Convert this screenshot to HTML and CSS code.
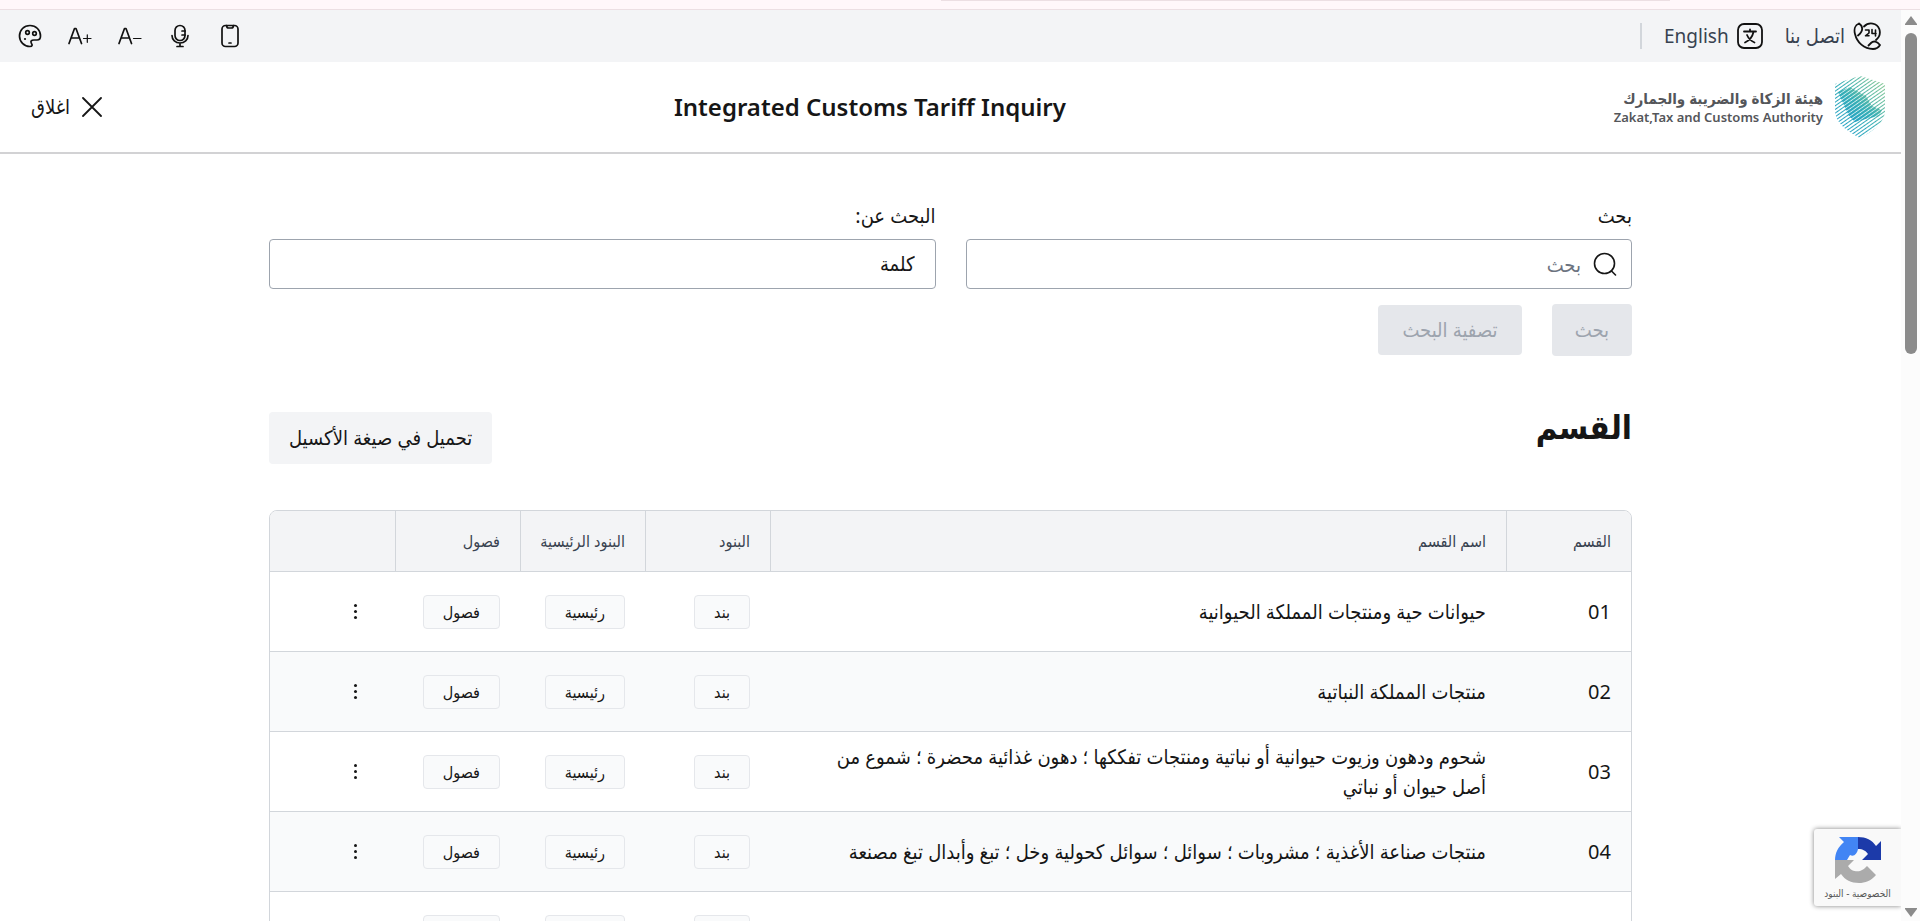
FILE: index.html
```html
<!DOCTYPE html>
<html lang="ar" dir="rtl">

<head>
    <meta charset="UTF-8">
    <meta name="viewport" content="width=device-width, initial-scale=1.0">
    <title>Integrated Customs Tariff Inquiry</title>
    <link rel="stylesheet" href="styles.css">
</head>

<body>
    <div class="strip"><div class="strip-line"></div></div>
    <div class="window">
        <div class="page">
            <div class="topbar">
                <nav class="links">
                    <a href="#" class="link">
                        <svg width="28" height="28" viewBox="0 0 28 28" fill="none" stroke="#111" stroke-width="1.800" stroke-linejoin="round" stroke-linecap="round">
                            <path d="M6 1.500C2 3 .8 7.500 2 12c2 8.500 9 15 18 15 3 0 5.500-1.500 7-4-3-3.800-6.500-4.500-9-2-1 1-1.800 1.800-2.500 2.500M6 1.500c4 2.500 4.800 7.500-1 12" />
                            <path d="M11 4.500C16-.5 24 1 26.300 7c1.300 4 .2 8-3.300 11" />
                            <path d="M12.500 8h3.500v3l-3.500 2.800H16M19 7.500v4h4M22.500 8v6" stroke-width="1.600" />
                        </svg>
                        <span>اتصل بنا</span>
                    </a>
                    <a href="#" class="link" lang="en">
                        <svg width="26" height="26" viewBox="0 0 26 26" fill="none" stroke="#111" stroke-width="1.800" stroke-linecap="round">
                            <rect x="1" y="1" width="24" height="24" rx="6" />
                            <path d="M7 8.500h12M13 6.500v2M16.500 9c-1 4.500-4 8.500-8.500 10.500M10 12c1.500 3.500 4 6 7.500 7.500" />
                        </svg>
                        <span class="link-en">English</span>
                    </a>
                    <span class="divider"></span>
                </nav>
                <div class="tools">
                    <button class="tool" aria-label="الجوال">
                        <svg width="24" height="24" viewBox="0 0 24 24" fill="none" stroke="#111" stroke-width="1.700" stroke-linecap="round" stroke-linejoin="round">
                            <rect x="4" y="1.500" width="16" height="21" rx="3.500" />
                            <path d="M8.500 1.500c.3 2 1 2.500 2 2.500h3c1 0 1.700-.5 2-2.500M11 19h2" />
                        </svg>
                    </button>
                    <button class="tool" aria-label="الصوت">
                        <svg width="24" height="24" viewBox="0 0 24 24" fill="none" stroke="#111" stroke-width="1.700" stroke-linecap="round">
                            <rect x="7" y="1.500" width="10" height="15" rx="5" />
                            <path d="M4 11.500c0 4.500 3.500 7.500 8 7.500s8-3 8-7.500M12 19v3.500M9 22.500h6M17 7h-3M17 11h-3" />
                        </svg>
                    </button>
                    <button class="tool" aria-label="تصغير الخط">
                        <svg width="24" height="24" viewBox="0 0 24 24" fill="none" stroke="#111" stroke-width="1.700" stroke-linecap="round" stroke-linejoin="round">
                            <path d="M1 19.500L6.500 4.500h1.500L13.500 19.500M3 14h8.500" />
                            <path d="M15.500 14.500h7.500" stroke-width="1.200" />
                        </svg>
                    </button>
                    <button class="tool" aria-label="تكبير الخط">
                        <svg width="24" height="24" viewBox="0 0 24 24" fill="none" stroke="#111" stroke-width="1.700" stroke-linecap="round" stroke-linejoin="round">
                            <path d="M1 19.500L6.500 4.500h1.500L13.500 19.500M3 14h8.500" />
                            <path d="M15.500 14.500h7.500M19.300 10.800v7.500" stroke-width="1.200" />
                        </svg>
                    </button>
                    <button class="tool" aria-label="الألوان">
                        <svg width="24" height="24" viewBox="0 0 24 24" fill="none" stroke="#111" stroke-width="1.700" stroke-linecap="round" stroke-linejoin="round">
                            <path d="M22.500 12C22.500 6 18 1.500 12 1.500S1.500 6 1.500 12c0 5.500 4.500 10.500 10.500 10.500 2.500 0 2.500-1.500 1.500-3-1.500-2.500 0-3.500 2.500-3.500h3c2.500 0 3.500-1.500 3.500-4z" />
                            <circle cx="9.500" cy="8.500" r="1.800" />
                            <circle cx="16.500" cy="9.500" r="1.800" />
                            <path d="M7 15h.01" stroke-width="2.200" />
                        </svg>
                    </button>
                </div>
            </div>

            <header class="header">
                <a href="#" class="logo">
                    <svg width="50" height="62" viewBox="0 0 50 62">
                        <defs>
                            <linearGradient id="tone" x1="0" y1="1" x2="1" y2="0">
                                <stop offset="0" stop-color="#1c9ccb" />
                                <stop offset=".5" stop-color="#35aeb5" />
                                <stop offset="1" stop-color="#8fcb8c" />
                            </linearGradient>
                            <pattern id="thin" width="3" height="3" patternUnits="userSpaceOnUse" patternTransform="rotate(-35)">
                                <rect width="3" height="1" fill="#fff" />
                            </pattern>
                            <pattern id="thick" width="3" height="3" patternUnits="userSpaceOnUse" patternTransform="rotate(-35)">
                                <rect width="3" height="2.200" fill="#fff" />
                            </pattern>
                            <mask id="outer"><rect width="50" height="62" fill="url(#thin)" /></mask>
                            <mask id="inner"><rect width="50" height="62" fill="url(#thick)" /></mask>
                        </defs>
                        <path mask="url(#outer)" fill="url(#tone)" d="M0 8C9 5 17 2 25 0c8 2 16 5 25 8v26c0 13-12 21-25 28C12 55 0 47 0 34z" />
                        <path mask="url(#inner)" fill="url(#tone)" d="M3 16l12-5 16 9 6 10 10 4-3 6-13 3-11 3-6-6z" />
                    </svg>
                    <span class="logo-text">
                        <span class="logo-ar">هيئة الزكاة والضريبة والجمارك</span>
                        <span class="logo-en" dir="ltr" lang="en">Zakat,Tax and Customs Authority</span>
                    </span>
                </a>
                <h1 class="title" dir="ltr" lang="en">Integrated Customs Tariff Inquiry</h1>
                <button class="close">
                    <svg width="20" height="20" viewBox="0 0 20 20" stroke="#161616" stroke-width="1.800" stroke-linecap="round">
                        <path d="M1 1l18 18M19 1L1 19" />
                    </svg>
                    <span>اغلاق</span>
                </button>
            </header>

            <main class="container">
                <form class="search">
                    <div class="field">
                        <label for="keyword">بحث</label>
                        <div class="control">
                            <svg width="24" height="24" viewBox="0 0 24 24" fill="none" stroke="#161616" stroke-width="1.600" stroke-linecap="round">
                                <circle cx="11.500" cy="11.500" r="10" />
                                <path d="M18.500 19L22.500 23" />
                            </svg>
                            <input id="keyword" type="text" placeholder="بحث">
                        </div>
                    </div>
                    <div class="field">
                        <label for="kind">البحث عن:</label>
                        <div class="control">
                            <select id="kind">
                                <option>كلمة</option>
                            </select>
                        </div>
                    </div>
                    <div class="actions">
                        <button class="btn btn-search" type="submit" disabled>بحث</button>
                        <button class="btn btn-clear" type="reset" disabled>تصفية البحث</button>
                    </div>
                </form>

                <div class="section-head">
                    <h2>القسم</h2>
                    <button class="btn btn-excel">تحميل في صيغة الأكسيل</button>
                </div>

                <div class="table-box">
                    <table class="tariff">
                        <thead>
                            <tr>
                                <th class="col">القسم</th>
                                <th>اسم القسم</th>
                                <th class="col">البنود</th>
                                <th class="col">البنود الرئيسية</th>
                                <th class="col">فصول</th>
                                <th class="col"></th>
                            </tr>
                        </thead>
                        <tbody>
                            <tr>
                                <td>01</td>
                                <td class="name">حيوانات حية ومنتجات المملكة الحيوانية</td>
                                <td><button class="tag">بند</button></td>
                                <td><button class="tag">رئيسية</button></td>
                                <td><button class="tag">فصول</button></td>
                                <td><button class="more" aria-label="المزيد"><i></i><i></i><i></i></button></td>
                            </tr>
                            <tr>
                                <td>02</td>
                                <td class="name">منتجات المملكة النباتية</td>
                                <td><button class="tag">بند</button></td>
                                <td><button class="tag">رئيسية</button></td>
                                <td><button class="tag">فصول</button></td>
                                <td><button class="more" aria-label="المزيد"><i></i><i></i><i></i></button></td>
                            </tr>
                            <tr>
                                <td>03</td>
                                <td class="name">شحوم ودهون وزيوت حيوانية أو نباتية ومنتجات تفككها ؛ دهون غذائية محضرة ؛ شموع من أصل حيوان أو نباتي</td>
                                <td><button class="tag">بند</button></td>
                                <td><button class="tag">رئيسية</button></td>
                                <td><button class="tag">فصول</button></td>
                                <td><button class="more" aria-label="المزيد"><i></i><i></i><i></i></button></td>
                            </tr>
                            <tr>
                                <td>04</td>
                                <td class="name">منتجات صناعة الأغذية ؛ مشروبات ؛ سوائل ؛ سوائل كحولية وخل ؛ تبغ وأبدال تبغ مصنعة</td>
                                <td><button class="tag">بند</button></td>
                                <td><button class="tag">رئيسية</button></td>
                                <td><button class="tag">فصول</button></td>
                                <td><button class="more" aria-label="المزيد"><i></i><i></i><i></i></button></td>
                            </tr>
                            <tr>
                                <td></td>
                                <td class="name"></td>
                                <td><button class="tag">بند</button></td>
                                <td><button class="tag">رئيسية</button></td>
                                <td><button class="tag">فصول</button></td>
                                <td></td>
                            </tr>
                        </tbody>
                    </table>
                </div>
            </main>

            <div class="captcha">
                <svg width="48" height="48" viewBox="0 0 48 48">
                    <path fill="#1c3aa9" d="M24 1c8 0 14 3 18 9l5-5v19H28l6-6c-2-3-5-5-10-5z" />
                    <path fill="#4285f4" d="M24 1v12c-1 5-4 8-8 6l-3 5H1C1 17 4 11 10 6L5 1z" />
                    <path fill="#ababab" d="M1 24h19l-6 6c3 5 8 6 12 5 3-1 5-3 7-5l9 9c-5 6-11 8-17 8-8 0-14-3-18-9l-6 5z" />
                </svg>
                <div class="captcha-text"><a href="#">الخصوصية</a> - <a href="#">البنود</a></div>
            </div>
        </div>

        <!-- scrollbar -->
        <div class="scrollbar">
            <svg width="12" height="10" viewBox="0 0 12 10"><path fill="#8b8b8b" d="M6 0l6 8v1H0V8z" /></svg>
            <div class="track"><div class="thumb"></div></div>
            <svg width="12" height="10" viewBox="0 0 12 10"><path fill="#8b8b8b" d="M6 10l6-8V1H0v1z" /></svg>
        </div>
    </div>
</body>

</html>
```
FILE: styles.css
```css
* {
    box-sizing: border-box;
}

html,
body,
h1,
h2 {
    margin: 0;
    padding: 0;
}

body {
    height: 100vh;
    overflow: hidden;
    display: flex;
    flex-direction: column;
    background-color: #fff;
    color: #161616;
    font-family: "Noto Sans", "DejaVu Sans Condensed", "DejaVu Sans", sans-serif;
    font-size: 20px;
    line-height: 30px;
}

button,
input,
select {
    font-family: inherit;
    font-size: inherit;
    line-height: inherit;
    color: inherit;
    border: none;
    background: none;
    margin: 0;
    padding: 0;
}

button {
    cursor: pointer;
}

a {
    color: inherit;
    text-decoration: none;
}

svg {
    display: block;
    flex: none;
}

.strip {
    flex: none;
    height: 10px;
    background-color: #fff7fa;
    border-bottom: 1px solid #ecdfe3;
}

.strip-line {
    width: 38%;
    height: 1px;
    margin-right: 13%;
    background-color: #ecdfe3;
}

.window {
    flex: 1;
    min-height: 0;
    display: flex;
    direction: ltr;
}

.page {
    flex: 1;
    min-width: 0;
    direction: rtl;
    overflow: hidden;
    position: relative;
}

/* top bar */
.topbar {
    height: 52px;
    padding: 0 20px 0 18px;
    display: flex;
    justify-content: space-between;
    align-items: center;
    background-color: #f3f4f6;
}

.links,
.link,
.tools {
    display: flex;
    align-items: center;
}

.links {
    gap: 22px;
    color: #384250;
}

.link {
    gap: 8px;
}

.link-en {
    font-size: 19px;
}

.divider {
    width: 2px;
    height: 26px;
    background-color: #d2d6db;
}

.tools {
    gap: 26px;
}

/* header */
.header {
    height: 92px;
    padding: 0 16px 0 31px;
    display: flex;
    justify-content: space-between;
    align-items: center;
    border-bottom: 2px solid #d2d2d4;
}

.logo {
    display: flex;
    align-items: center;
    gap: 12px;
}

.logo-text {
    display: flex;
    flex-direction: column;
    color: #54565a;
    font-weight: bold;
}

.logo-ar {
    font-size: 15px;
    line-height: 20px;
}

.logo-en {
    font-family: "Noto Sans", sans-serif;
    font-size: 13px;
    line-height: 18px;
    font-weight: 600;
}

.title {
    font-size: 24px;
    line-height: 32px;
    font-weight: 600;
}

.close {
    padding-right: 24px;
    display: flex;
    align-items: center;
    gap: 12px;
}

/* content */
.container {
    max-width: 1363px;
    margin: 0 auto;
    padding-top: 47px;
}

.search {
    display: grid;
    grid-template-columns: 1fr 1fr;
    column-gap: 30px;
    row-gap: 15px;
}

.field label {
    display: block;
    margin-bottom: 8px;
}

.control {
    height: 50px;
    padding: 0 14px 0 20px;
    display: flex;
    align-items: center;
    gap: 12px;
    border: 1px solid #9da4ae;
    border-radius: 4px;
}

.control input,
.control select {
    flex: 1;
    min-width: 0;
    height: 100%;
    outline: none;
    appearance: none;
}

.control select {
    padding-right: 6px;
}

.control input::placeholder {
    color: #6c737f;
    opacity: 1;
}

.actions {
    grid-column: 1 / -1;
    display: flex;
    align-items: center;
    gap: 30px;
}

.btn {
    padding: 11px 20px;
    border-radius: 4px;
    background-color: #f3f4f6;
}

.btn:disabled {
    background-color: #e5e7eb;
    color: #9da4ae;
}

.btn-search {
    min-width: 80px;
}

.btn-clear {
    min-width: 144px;
    padding: 10px 20px;
}

.section-head {
    margin: 41px 0 46px;
    display: flex;
    justify-content: space-between;
    align-items: flex-end;
}

.section-head h2 {
    font-size: 33px;
    line-height: 60px;
    padding-bottom: 7px;
}

/* table */
.table-box {
    border: 1px solid #d2d6db;
    border-radius: 8px 8px 0 0;
    overflow: hidden;
}

.tariff {
    width: 100%;
    table-layout: fixed;
    border-collapse: separate;
    border-spacing: 0;
}

.tariff th {
    height: 61px;
    padding: 0 20px;
    background-color: #f3f4f6;
    border-bottom: 1px solid #d2d6db;
    border-left: 1px solid #d2d6db;
    color: #384250;
    font-size: 16px;
    font-weight: 500;
    text-align: right;
    white-space: nowrap;
}

.tariff th:last-child {
    border-left: none;
}

.tariff .col {
    width: 125px;
}

.tariff td {
    height: 80px;
    padding: 0 20px;
    border-bottom: 1px solid #d2d6db;
    text-align: right;
}

.tariff .name {
    padding-left: 54px;
}

.tariff tr:nth-child(even) td {
    background-color: #f9fafb;
}

.tag {
    display: block;
    height: 34px;
    padding: 0 19px;
    border: 1px solid #e5e7eb;
    border-radius: 4px;
    background-color: #f9fafb;
    font-size: 16px;
}

.more {
    width: 40px;
    height: 34px;
    display: flex;
    flex-direction: column;
    align-items: center;
    justify-content: center;
    gap: 3px;
}

.more i {
    width: 3px;
    height: 3px;
    border-radius: 50%;
    background-color: #161616;
}

/* recaptcha badge */
.captcha {
    position: absolute;
    right: 0;
    bottom: 15px;
    width: 87px;
    height: 77px;
    padding-top: 7px;
    display: flex;
    flex-direction: column;
    align-items: center;
    background-color: #f9f9f9;
    border-radius: 3px 0 0 3px;
    box-shadow: 0 0 5px #808080;
}

.captcha-text {
    font-size: 10px;
    line-height: 18px;
    color: #555;
}

/* scrollbar */
.scrollbar {
    flex: none;
    width: 19px;
    padding: 6px 0 4px;
    display: flex;
    flex-direction: column;
    align-items: center;
    gap: 7px;
    background-color: #fcfcfc;
}

.track {
    flex: 1;
    width: 12px;
}

.thumb {
    height: 37%;
    border-radius: 6px;
    background-color: #8b8b8b;
}
```
